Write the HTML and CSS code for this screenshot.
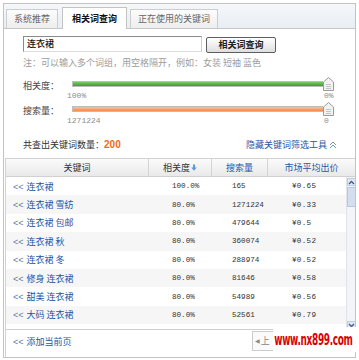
FILE: index.html
```html
<!DOCTYPE html>
<html>
<head>
<meta charset="utf-8">
<link rel="stylesheet" href="styles.css">
</head>
<body>
<div class="panel">
  <div class="tabs">
    <div class="tab tab-1">系统推荐</div>
    <div class="tab tab-2 active">相关词查询</div>
    <div class="tab tab-3">正在使用的关键词</div>
  </div>

  <div class="search">
    <div class="query-row">
      <div class="query">连衣裙</div>
      <div class="btn">相关词查询</div>
    </div>
    <div class="note">注：可以输入多个词组，用空格隔开，例如：女装 短袖 蓝色</div>

    <div class="sliders">
      <div class="slider-row">
        <div class="slider-label">相关度：</div>
        <div class="track track-green"></div>
        <svg class="handle" width="11" height="14" viewBox="0 0 11 14"><path d="M5.5 0.5 L10.5 5 L10.5 13.5 L0.5 13.5 L0.5 5 Z" fill="#f2f2f2" stroke="#9a9a9a"/><path d="M3 7.5H8M3 9.5H8M3 11.5H8" stroke="#c4c4c4"/></svg>
      </div>
      <div class="values"><span class="v-min">100%</span><span class="v-max">0%</span></div>
      <div class="slider-row">
        <div class="slider-label">搜索量：</div>
        <div class="track track-orange"></div>
        <svg class="handle" width="11" height="14" viewBox="0 0 11 14"><path d="M5.5 0.5 L10.5 5 L10.5 13.5 L0.5 13.5 L0.5 5 Z" fill="#f2f2f2" stroke="#9a9a9a"/><path d="M3 7.5H8M3 9.5H8M3 11.5H8" stroke="#c4c4c4"/></svg>
      </div>
      <div class="values"><span class="v-min">1271224</span><span class="v-max">0</span></div>
    </div>

    <div class="count-row">
      <div class="count">共查出关键词数量：<b class="num">200</b></div>
      <div class="toggle">隐藏关键词筛选工具
        <svg class="chev" width="8" height="8" viewBox="0 0 8 8"><path d="M1 4 L4 1 L7 4 M1 7 L4 4 L7 7" fill="none" stroke="#8090b0" stroke-width="1"/></svg>
      </div>
    </div>
  </div>

  <div class="table">
    <div class="thead">
      <div class="th">关键词</div>
      <div class="th">相关度<svg class="sort" width="6" height="7" viewBox="0 0 6 7"><path d="M2 0.5H4V3.5H5.8L3 6.7L0.2 3.5H2Z" fill="#5c9ad8"/></svg></div>
      <div class="th link">搜索量</div>
      <div class="th link last">市场平均出价</div>
    </div>
    <div class="tbody">
      <div class="rows">
        <div class="row"><div class="kw"><span class="add">&lt;&lt;</span>连衣裙</div><div class="n rel">100.0%</div><div class="n srch">165</div><div class="n price">¥0.65</div></div>
        <div class="row alt"><div class="kw"><span class="add">&lt;&lt;</span>连衣裙 雪纺</div><div class="n rel">80.0%</div><div class="n srch">1271224</div><div class="n price">¥0.33</div></div>
        <div class="row"><div class="kw"><span class="add">&lt;&lt;</span>连衣裙 包邮</div><div class="n rel">80.0%</div><div class="n srch">479644</div><div class="n price">¥0.5</div></div>
        <div class="row alt"><div class="kw"><span class="add">&lt;&lt;</span>连衣裙 秋</div><div class="n rel">80.0%</div><div class="n srch">360074</div><div class="n price">¥0.52</div></div>
        <div class="row"><div class="kw"><span class="add">&lt;&lt;</span>连衣裙 冬</div><div class="n rel">80.0%</div><div class="n srch">288974</div><div class="n price">¥0.52</div></div>
        <div class="row alt"><div class="kw"><span class="add">&lt;&lt;</span>修身 连衣裙</div><div class="n rel">80.0%</div><div class="n srch">81646</div><div class="n price">¥0.58</div></div>
        <div class="row"><div class="kw"><span class="add">&lt;&lt;</span>甜美 连衣裙</div><div class="n rel">80.0%</div><div class="n srch">54989</div><div class="n price">¥0.56</div></div>
        <div class="row alt"><div class="kw"><span class="add">&lt;&lt;</span>大码 连衣裙</div><div class="n rel">80.0%</div><div class="n srch">52561</div><div class="n price">¥0.79</div></div>
      </div>
      <div class="scrollbar">
        <div class="sb-btn"><svg width="7" height="5" viewBox="0 0 7 5"><path d="M1 4 L3.5 1.5 L6 4" fill="none" stroke="#3a5a9a" stroke-width="1.3"/></svg></div>
        <div class="sb-thumb"></div>
        <div class="sb-space"></div>
        <div class="sb-btn"><svg width="7" height="5" viewBox="0 0 7 5"><path d="M1 1 L3.5 3.5 L6 1" fill="none" stroke="#3a5a9a" stroke-width="1.3"/></svg></div>
      </div>
    </div>
    <div class="footer">
      <div class="kw foot-link"><span class="add">&lt;&lt;</span>添加当前页</div>
      <div class="pager"><span class="pg-arrow">◀</span>上</div>
    </div>
  </div>
</div>
<div class="watermark"><span class="wm-text">www.nx899.com</span></div>
</body>
</html>
```

FILE: styles.css
```css
* { box-sizing: border-box; }

body {
  margin: 0;
  background: #fff;
  font-family: "Noto Sans CJK SC", "Liberation Sans", sans-serif;
  font-size: 9px;
  color: #333;
}

.panel {
  margin: 3px 0 0 3px;
  width: 353px;
  height: 355px;
  border: 1px solid #c3c3c3;
  display: flex;
  flex-direction: column;
  overflow: hidden;
}

/* tabs */
.tabs {
  height: 25px;
  display: flex;
  align-items: flex-end;
  padding-left: 2px;
  background: linear-gradient(#f5f7fa, #e9eef4);
  border-bottom: 1px solid #c6c6c6;
}
.tab {
  height: 19px;
  line-height: 18px;
  text-align: center;
  color: #666;
  border: 1px solid #cdcdcd;
  border-bottom: none;
  background: linear-gradient(#fcfcfc, #eeeeee);
}
.tab-1 { width: 52px; }
.tab-2 { width: 65px; margin-left: 4px; }
.tab-3 { width: 88px; margin-left: 3px; }
.tab.active {
  height: 22px;
  line-height: 21px;
  margin-bottom: -1px;
  background: #fff;
  color: #111;
  font-weight: bold;
  border-color: #c3c3c3;
}

/* search */
.search { padding: 7px 18px 0 19px; }
.query-row { display: flex; gap: 4px; align-items: flex-start; }
.query {
  width: 179px;
  height: 16px;
  line-height: 14px;
  padding-left: 3px;
  color: #111;
  font-weight: 500;
  border: 1px solid #8a8a8a;
  border-right-color: #cfcfcf;
  border-bottom-color: #dcdcdc;
}
.btn {
  width: 70px;
  height: 16px;
  margin-top: 1px;
  line-height: 14px;
  text-align: center;
  color: #222;
  font-weight: bold;
  border: 1px solid #5e5e5e;
  border-radius: 2px;
  background: linear-gradient(#ffffff, #dedede);
}
.note { margin-top: 4px; line-height: 12px; color: #9c9c9c; }

/* sliders */
.sliders { margin-top: 8px; }
.slider-row {
  display: grid;
  grid-template-columns: 49px 251px 11px;
  height: 14px;
}
.slider-label { line-height: 12px; padding-top: 3px; color: #444; }
.track {
  margin-top: 4px;
  height: 6px;
  border: 1px solid #bdbdbd;
  border-right: none;
}
.track-green { background: linear-gradient(#7ccb68, #3f9c31); }
.track-orange { background: linear-gradient(#f8c29b, #ef8c4f); }
.handle { display: block; }
.values {
  display: grid;
  grid-template-columns: 44px 257px 20px;
  height: 11px;
  line-height: 10px;
  font-family: "Liberation Mono", monospace;
  font-size: 8px;
  color: #8c8c8c;
}
.v-min { grid-column: 2; }
.v-max { grid-column: 3; }

/* count row */
.count-row {
  margin-top: 11px;
  height: 14px;
  line-height: 14px;
  display: flex;
  justify-content: space-between;
  align-items: center;
}
.count { color: #333; }
.num { font-family: "Liberation Sans", sans-serif; font-size: 10px; color: #f26b10; }
.toggle { color: #2a55a8; display: flex; align-items: center; gap: 2px; }
.chev { display: block; }

/* table */
.table {
  margin: 6px 0 0 1px;
  border-top: 1px solid #d2d2d2;
  border-left: 1px solid #d2d2d2;
  flex: 1;
  display: flex;
  flex-direction: column;
}
.thead {
  display: grid;
  grid-template-columns: 143px 63px 56px 1fr;
  height: 18px;
  border-bottom: 1px solid #d0d0d0;
  background: linear-gradient(#fbfbfb, #e9e9e9);
}
.th {
  line-height: 17px;
  text-align: center;
  color: #333;
  border-right: 1px solid #d4d4d4;
  display: flex;
  justify-content: center;
  align-items: center;
  gap: 1px;
}
.th.last { border-right: none; }
.th.link { color: #2a55a8; }
.sort { display: block; }

.tbody { height: 152px; display: flex; overflow: hidden; }
.rows { width: 340px; }
.row {
  display: grid;
  grid-template-columns: 143px 63px 56px 78px;
  height: 18.4px;
  align-items: center;
}
.row.alt { background: #f6f6f6; }
.kw { padding-left: 7px; color: #2454a6; white-space: nowrap; }
.add {
  font-family: "Liberation Sans", sans-serif;
  color: #6479ad;
  letter-spacing: 0;
  margin-right: 3px;
}
.n {
  font-family: "Liberation Mono", monospace;
  font-size: 7.6px;
  color: #333;
}
.rel { padding-left: 23px; }
.srch { padding-left: 20px; }
.price { padding-left: 24px; letter-spacing: 0.3px; }

.scrollbar {
  width: 10px;
  display: flex;
  flex-direction: column;
  background: #f2f4f8;
  border-left: 1px solid #dfe3ea;
}
.sb-btn {
  height: 8px;
  margin-top: 1px;
  display: flex;
  align-items: center;
  justify-content: center;
  background: #dfe7f3;
  border: 1px solid #c0cde2;
}
.sb-thumb {
  height: 20px;
  margin-top: 1px;
  background: #d3def0;
  border: 1px solid #b8c8e2;
}
.sb-space { flex: 1; }

.footer {
  flex: 1;
  border-top: 1px solid #cfcfcf;
  display: flex;
  align-items: flex-start;
  padding-top: 6px;
}
.foot-link { line-height: 12px; }
.pager {
  margin-left: auto;
  margin-right: 82px;
  margin-top: -5px;
  width: 21px;
  height: 20px;
  line-height: 18px;
  padding-left: 2px;
  color: #888;
  white-space: nowrap;
  border: 1px solid #cccccc;
  border-right: none;
  background: #fafafa;
  display: flex;
  align-items: center;
  gap: 1px;
}
.pg-arrow { font-size: 6px; font-family: "DejaVu Sans", sans-serif; }

.watermark {
  position: absolute;
  left: 273px;
  top: 327px;
  width: 86px;
  height: 25px;
  background: #fff;
  overflow: hidden;
}
.wm-text {
  display: inline-block;
  padding-left: 2px;
  color: #d90000;
  font-family: "Liberation Sans Narrow", "DejaVu Sans Condensed", sans-serif;
  font-weight: bold;
  font-size: 16px;
  letter-spacing: -0.5px;
  line-height: 25px;
  white-space: nowrap;
  transform: scaleX(0.62);
  transform-origin: left center;
}
```
